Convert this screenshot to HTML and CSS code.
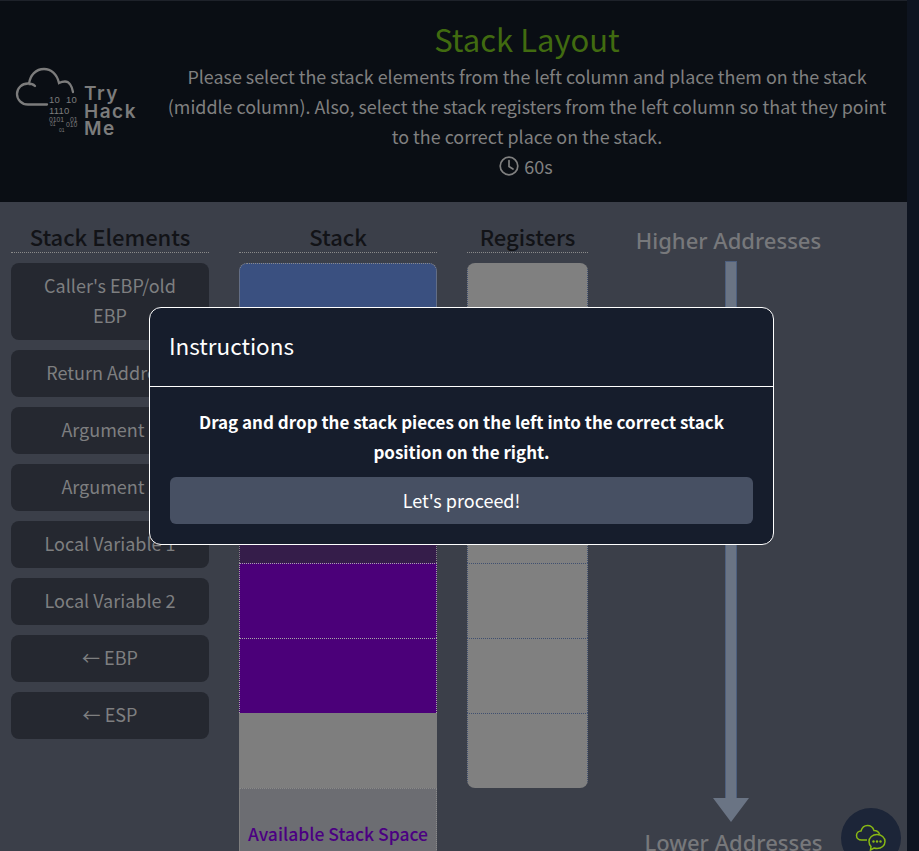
FILE: index.html
```html
<!DOCTYPE html>
<html lang="en">
<head>
<meta charset="utf-8">
<title>Stack Layout</title>
<link rel="stylesheet" href="styles.css">
</head>
<body>
<div class="shell">
  <div class="page">
    <header class="header">
      <div class="logo">
        <svg class="cloud" width="125" height="76" viewBox="0 0 125 76">
          <path class="cloud-line" d="M32 38.500H13C6.500 38.500 2 33.500 2 28C2 22 7 17.500 13 17.500C16 17.500 18.500 18.500 20 20M14 18C15 9 21 3 29 3C36 3 42 8 44 17C46 16 48 15.500 50 15.500C54 15.500 57 20 58 26" />
          <text class="bin bin-a" x="34" y="37">10</text>
          <text class="bin bin-a" x="51" y="37">10</text>
          <text class="bin bin-a" x="34" y="48">1110</text>
          <text class="bin bin-b" x="34" y="55.500">0101</text>
          <text class="bin bin-b" x="55" y="55.500">01</text>
          <text class="bin bin-c" x="35" y="60">01</text>
          <text class="bin bin-b" x="51" y="60.500">010</text>
          <text class="bin bin-c" x="44" y="66">01</text>
          <text class="brand" x="69" y="34">Try</text>
          <text class="brand" x="69" y="52">Hack</text>
          <text class="brand" x="69" y="69">Me</text>
        </svg>
      </div>
      <div class="intro">
        <h1 class="title">Stack Layout</h1>
        <p class="lead">Please select the stack elements from the left column and place them on the stack (middle column). Also, select the stack registers from the left column so that they point to the correct place on the stack.</p>
        <p class="timer">
          <svg class="clock" width="20" height="20" viewBox="0 0 20 20">
            <circle cx="10" cy="10" r="8.800" />
            <path d="M10 4.500V10.500L14 13" />
          </svg>
          <span>60s</span>
        </p>
      </div>
    </header>
    <main class="board">
      <section class="col col-elements">
        <h2 class="col-title">Stack Elements</h2>
        <div class="pieces">
          <div class="piece">Caller's EBP/old EBP</div>
          <div class="piece">Return Address</div>
          <div class="piece">Argument 1</div>
          <div class="piece">Argument 2</div>
          <div class="piece">Local Variable 1</div>
          <div class="piece">Local Variable 2</div>
          <div class="piece">← EBP</div>
          <div class="piece">← ESP</div>
        </div>
      </section>
      <section class="col col-stack">
        <h2 class="col-title">Stack</h2>
        <div class="stack">
          <div class="slot slot-blue slot-top"></div>
          <div class="slot slot-blue"></div>
          <div class="slot slot-blue"></div>
          <div class="slot slot-dark"></div>
          <div class="slot slot-purple"></div>
          <div class="slot slot-purple"></div>
          <div class="slot slot-gray"></div>
          <div class="slot slot-free">Available Stack Space</div>
        </div>
      </section>
      <section class="col col-regs">
        <h2 class="col-title">Registers</h2>
        <div class="regs">
          <div class="reg"></div>
          <div class="reg"></div>
          <div class="reg"></div>
          <div class="reg"></div>
          <div class="reg"></div>
          <div class="reg"></div>
          <div class="reg"></div>
        </div>
      </section>
      <section class="col col-axis">
        <div class="axis-label axis-high">Higher Addresses</div>
        <div class="shaft"></div>
        <div class="head"></div>
        <div class="axis-label axis-low">Lower Addresses</div>
      </section>
    </main>
  </div>
  <div class="scrollbar"></div>
</div>
<div class="modal">
  <div class="modal-head">Instructions</div>
  <div class="modal-body">
    <p class="modal-text">Drag and drop the stack pieces on the left into the correct stack position on the right.</p>
    <button class="modal-btn">Let's proceed!</button>
  </div>
</div>
<button class="chat">
  <svg width="34" height="34" viewBox="0 0 34 34">
    <path d="M13 19H7.500C4.500 19 2.500 17 2.500 14.500C2.500 12 4.500 10 7 10C8 6.500 10.500 4.500 13.500 4.500C16.500 4.500 19 6.500 20 9.500C22.500 9.500 24.500 10.500 25.500 13" />
    <path d="M23 13.500C27.500 13.500 31 16.500 31 20.500C31 24.500 27.500 27.500 23 27.500C22 27.500 21 27.300 20 27L16.500 29L17 25.500C15.700 24.200 15 22.500 15 20.500C15 16.500 18.500 13.500 23 13.500Z" />
    <circle class="dot" cx="19.500" cy="20.500" r="1.200" />
    <circle class="dot" cx="23" cy="20.500" r="1.200" />
    <circle class="dot" cx="26.500" cy="20.500" r="1.200" />
  </svg>
</button>
</body>
</html>
```

FILE: styles.css
```css
* { box-sizing: border-box; }
html, body { margin: 0; height: 100%; overflow: hidden; }
body {
  font-family: "Noto Sans CJK SC", "Noto Sans", sans-serif;
  background: #3b3f49;
  color: #808080;
}
.shell { display: flex; height: 851px; }
.page { width: 907px; flex: none; display: flex; flex-direction: column; overflow: hidden; }
.scrollbar { flex: 1; background: #0e1420; }

.header {
  height: 202px;
  flex: none;
  display: flex;
  align-items: center;
  background: #0a0e14;
  border-top: 1px solid #1e222a;
}
.logo { width: 150px; flex: none; padding: 4px 0 0 15px; }
.cloud { display: block; }
.cloud-line { fill: none; stroke: #7c7c7c; stroke-width: 2.300; stroke-linecap: round; }
.bin { fill: #7c7c7c; font-family: "Liberation Sans", sans-serif; }
.bin-a { font-size: 9.500px; letter-spacing: .2px; }
.bin-b { font-size: 6.800px; }
.bin-c { font-size: 5px; }
.brand { fill: #7c7c7c; font-family: Inter, sans-serif; font-size: 19px; font-weight: 600; letter-spacing: 1.500px; }

.intro { flex: 1; min-width: 0; padding: 0 14px 0 11px; text-align: center; margin-top: -6px; }
.title { margin: 0; font-size: 31px; line-height: 44px; font-weight: 400; color: #416b10; }
.lead { margin: 0; font-size: 17.900px; line-height: 30px; color: #808080; }
.timer { margin: 0; padding-right: 2px; font-size: 18px; line-height: 30px; display: flex; justify-content: center; align-items: center; gap: 5px; }
.clock { display: block; }
.clock circle, .clock path { fill: none; stroke: #808080; stroke-width: 1.700; stroke-linecap: round; }

.board { flex: 1; display: flex; gap: 30px; padding: 20px 0 0 11px; align-items: flex-start; min-height: 0; }
.col { flex: none; }
.col-elements, .col-stack { width: 198px; }
.col-regs { width: 121px; }
.col-axis { width: 226px; padding-top: 3px; display: flex; flex-direction: column; align-items: center; }
.col-title {
  margin: 0 0 10px;
  padding-bottom: 2px;
  font-size: 22px;
  line-height: 28px;
  font-weight: 500;
  color: #121317;
  text-align: center;
  border-bottom: 1px dotted #8a8a8a;
}
.pieces { display: flex; flex-direction: column; gap: 10px; }
.piece {
  background: #252830;
  border-radius: 8px;
  padding: 7px 20px 10px;
  font-size: 18px;
  line-height: 30px;
  text-align: center;
  color: #7e7f80;
}

.stack { display: flex; flex-direction: column; }
.slot { height: 75px; flex: none; border: 1px dotted #8a8a8a; border-bottom: 0; }
.slot-top { border-radius: 8px 8px 0 0; }
.slot-blue { background: #3a5080; }
.slot-dark { background: #351d4a; }
.slot-purple { background: #4b0079; border-color: #a8a8a8; }
.slot-gray { background: #7e7e7e; border: 0; }
.slot-free {
  background: #6c6d72;
  height: 120px;
  border-top-color: #8a8a8a;
  border-left: 1px solid #7e7e7e;
  padding-top: 30px;
  text-align: center;
  font-size: 17.500px;
  line-height: 30px;
  font-weight: 500;
  color: #4b0082;
}

.regs { display: flex; flex-direction: column; border-radius: 8px; overflow: hidden; }
.reg { height: 75px; background: #808080; border: 1px dotted #3f4f70; border-bottom: 0; }
.reg:first-child { border-top: 0; }

.axis-label {
  font-family: "Noto Sans", sans-serif;
  font-size: 22px;
  line-height: 30px;
  font-weight: 500;
  color: #77787b;
  white-space: nowrap;
}
.axis-high { margin-right: 5px; }
.shaft { width: 12px; height: 537px; margin-top: 6px; background: #6a7484; border: 1px solid #4d5f7e; border-bottom: 0; flex: none; }
.head {
  width: 0; height: 0; flex: none;
  border-left: 18px solid transparent;
  border-right: 18px solid transparent;
  border-top: 24px solid #6a7484;
}
.axis-low { margin-top: 5px; margin-left: 5px; }

.modal {
  position: absolute;
  left: 149px;
  top: 307px;
  width: 625px;
  background: #161d2c;
  border: 1px solid #ffffff;
  border-radius: 12px;
  color: #fff;
}
.modal-head {
  height: 79px;
  padding: 0 19px 5px;
  display: flex;
  align-items: center;
  font-size: 22.500px;
  border-bottom: 1px solid #fff;
}
.modal-body { padding: 20px 20px 20px; display: flex; flex-direction: column; gap: 10px; }
.modal-text { margin: 0; font-size: 17px; line-height: 30px; font-weight: 700; text-align: center; }
.modal-btn {
  height: 47px;
  padding: 0 0 2px;
  border: 0;
  border-radius: 6px;
  background: #475063;
  color: #fff;
  font: inherit;
  font-size: 18px;
}
.chat {
  position: absolute;
  left: 841px;
  top: 808px;
  width: 60px;
  height: 60px;
  padding: 0;
  border: 0;
  border-radius: 50%;
  background: #1c2538;
  display: flex;
  align-items: center;
  justify-content: center;
}
.chat svg { display: block; }
.chat path { fill: none; stroke: #88b814; stroke-width: 1.500; }
.chat .dot { fill: #88b814; }
```
